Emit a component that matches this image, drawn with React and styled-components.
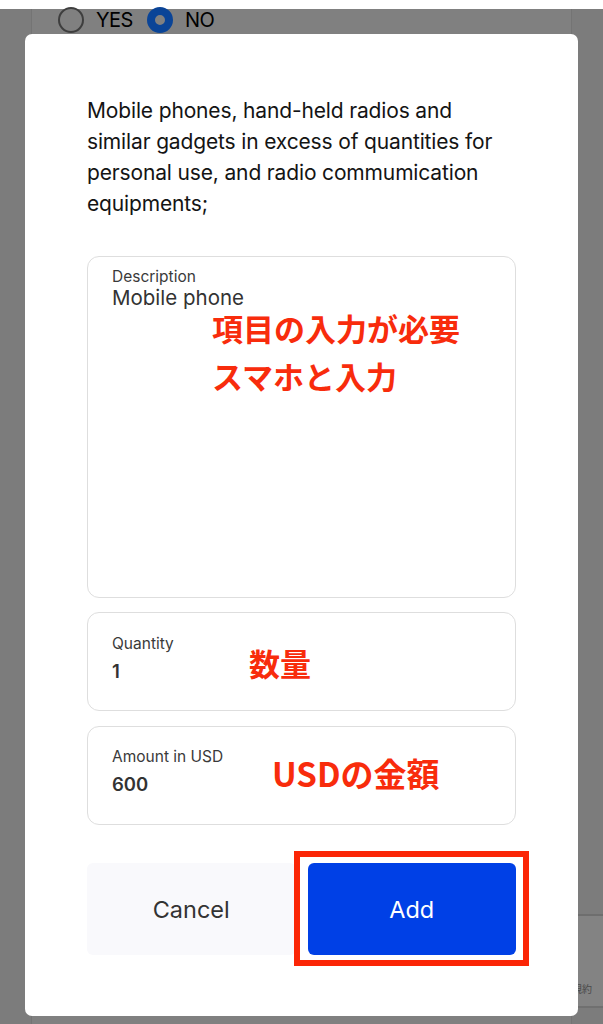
import React from 'react';
import styled, { createGlobalStyle } from 'styled-components';

const GlobalStyle = createGlobalStyle`
  body {
    margin: 0;
    font-family: Inter, "Noto Sans", "Noto Sans CJK JP", sans-serif;
    background: #ffffff;
  }
`;

const Screen = styled.div`
  position: relative;
  width: 603px;
  height: 1024px;
  overflow: hidden;
  display: flex;
  flex-direction: column;
`;

const StatusStrip = styled.div`
  height: 9px;
  background: #ffffff;
`;

const Backdrop = styled.div`
  flex: 1;
  background: #7c7c7c;
  padding: 0 31px;
  display: flex;
`;

const UnderCard = styled.div`
  flex: 1;
  background: #808080;
  border-left: 1px solid #747474;
  border-right: 1px solid #747474;
`;

const RadioRow = styled.div`
  display: flex;
  align-items: center;
  height: 22px;
  padding-left: 26px;
  gap: 12px;
  font-size: 20px;
  color: #000000;
`;

const Radio = styled.span`
  width: 26px;
  height: 26px;
  box-sizing: border-box;
  border-radius: 50%;
  border: ${({ $checked }) => ($checked ? '8px solid #0a4497' : '2px solid #3e3e3e')};
  background: ${({ $checked }) => ($checked ? '#808080' : 'transparent')};
`;

const RadioLabel = styled.span`
  margin-right: 2px;
  letter-spacing: -0.5px;
`;

const Badge = styled.div`
  position: absolute;
  right: 0;
  top: 914px;
  width: 256px;
  height: 94px;
  background: #838383;
  border-top: 2px solid #6e6e6e;
  border-bottom: 2px solid #707070;
  box-sizing: border-box;
  font-size: 10px;
  color: #4a4a4a;
  display: flex;
  align-items: flex-end;
  justify-content: flex-end;
  padding: 0 11px 10px 0;
  font-family: "Noto Sans CJK JP", sans-serif;
`;

const Modal = styled.div`
  position: absolute;
  left: 25px;
  top: 34px;
  width: 553px;
  height: 982px;
  box-sizing: border-box;
  background: #ffffff;
  border-radius: 7px;
  padding: 61px 62px 0;
  display: flex;
  flex-direction: column;
`;

const Heading = styled.p`
  margin: 0 0 37px;
  font-size: 21px;
  line-height: 31px;
  color: #141414;
  letter-spacing: -0.15px;
`;

const Field = styled.div`
  position: relative;
  box-sizing: border-box;
  height: ${({ $height }) => $height}px;
  border: 1.5px solid #dedede;
  border-radius: 12px;
  padding: ${({ $top }) => $top}px 24px 0;
  margin-bottom: ${({ $gap }) => $gap}px;
`;

const Label = styled.div`
  font-size: 15.5px;
  line-height: 18px;
  color: #3a3a3a;
`;

const Value = styled.div`
  font-size: ${({ $big }) => ($big ? '20.5px' : '18.5px')};
  line-height: 24px;
  font-weight: ${({ $big }) => ($big ? 400 : 600)};
  color: #333333;
  margin-top: ${({ $big }) => ($big ? '0' : '6px')};
`;

const Note = styled.div`
  position: absolute;
  left: ${({ $left }) => $left}px;
  top: ${({ $top }) => $top}px;
  font-family: "Noto Sans CJK JP", sans-serif;
  font-weight: 700;
  font-size: ${({ $size }) => $size}px;
  line-height: 48px;
  color: #f82c0c;
  white-space: nowrap;
`;

const Actions = styled.div`
  display: grid;
  grid-template-columns: 1fr 1fr;
  gap: 12px;
  margin-top: 38px;
  height: 92px;
`;

const Button = styled.button`
  position: relative;
  border: none;
  border-radius: 6px;
  font-family: Inter, sans-serif;
  font-size: 23.5px;
  background: ${({ $primary }) => ($primary ? '#0040e6' : '#f9f9fc')};
  color: ${({ $primary }) => ($primary ? '#ffffff' : '#333333')};
`;

const Highlight = styled.span`
  position: absolute;
  left: -14px;
  right: -13px;
  top: -12px;
  bottom: -11px;
  border: 6px solid #fb2606;
  pointer-events: none;
`;

export default function App() {
  return (
    <Screen>
      <GlobalStyle />
      <StatusStrip />
      <Backdrop>
        <UnderCard>
          <RadioRow>
            <Radio />
            <RadioLabel>YES</RadioLabel>
            <Radio $checked />
            <RadioLabel>NO</RadioLabel>
          </RadioRow>
        </UnderCard>
      </Backdrop>
      <Badge>規約</Badge>
      <Modal>
        <Heading>
          Mobile phones, hand-held radios and similar gadgets in excess of
          quantities for personal use, and radio commumication equipments;
        </Heading>
        <Field $height={342} $top={11} $gap={14}>
          <Label>Description</Label>
          <Value $big>Mobile phone</Value>
          <Note $left={124} $top={47} $size={31}>
            項目の入力が必要
            <br />
            スマホと入力
          </Note>
        </Field>
        <Field $height={99} $top={22} $gap={15}>
          <Label>Quantity</Label>
          <Value>1</Value>
          <Note $left={161} $top={26} $size={31}>数量</Note>
        </Field>
        <Field $height={99} $top={21} $gap={0}>
          <Label>Amount in USD</Label>
          <Value>600</Value>
          <Note $left={184} $top={22} $size={33}>USDの金額</Note>
        </Field>
        <Actions>
          <Button>Cancel</Button>
          <Button $primary>
            Add
            <Highlight />
          </Button>
        </Actions>
      </Modal>
    </Screen>
  );
}
